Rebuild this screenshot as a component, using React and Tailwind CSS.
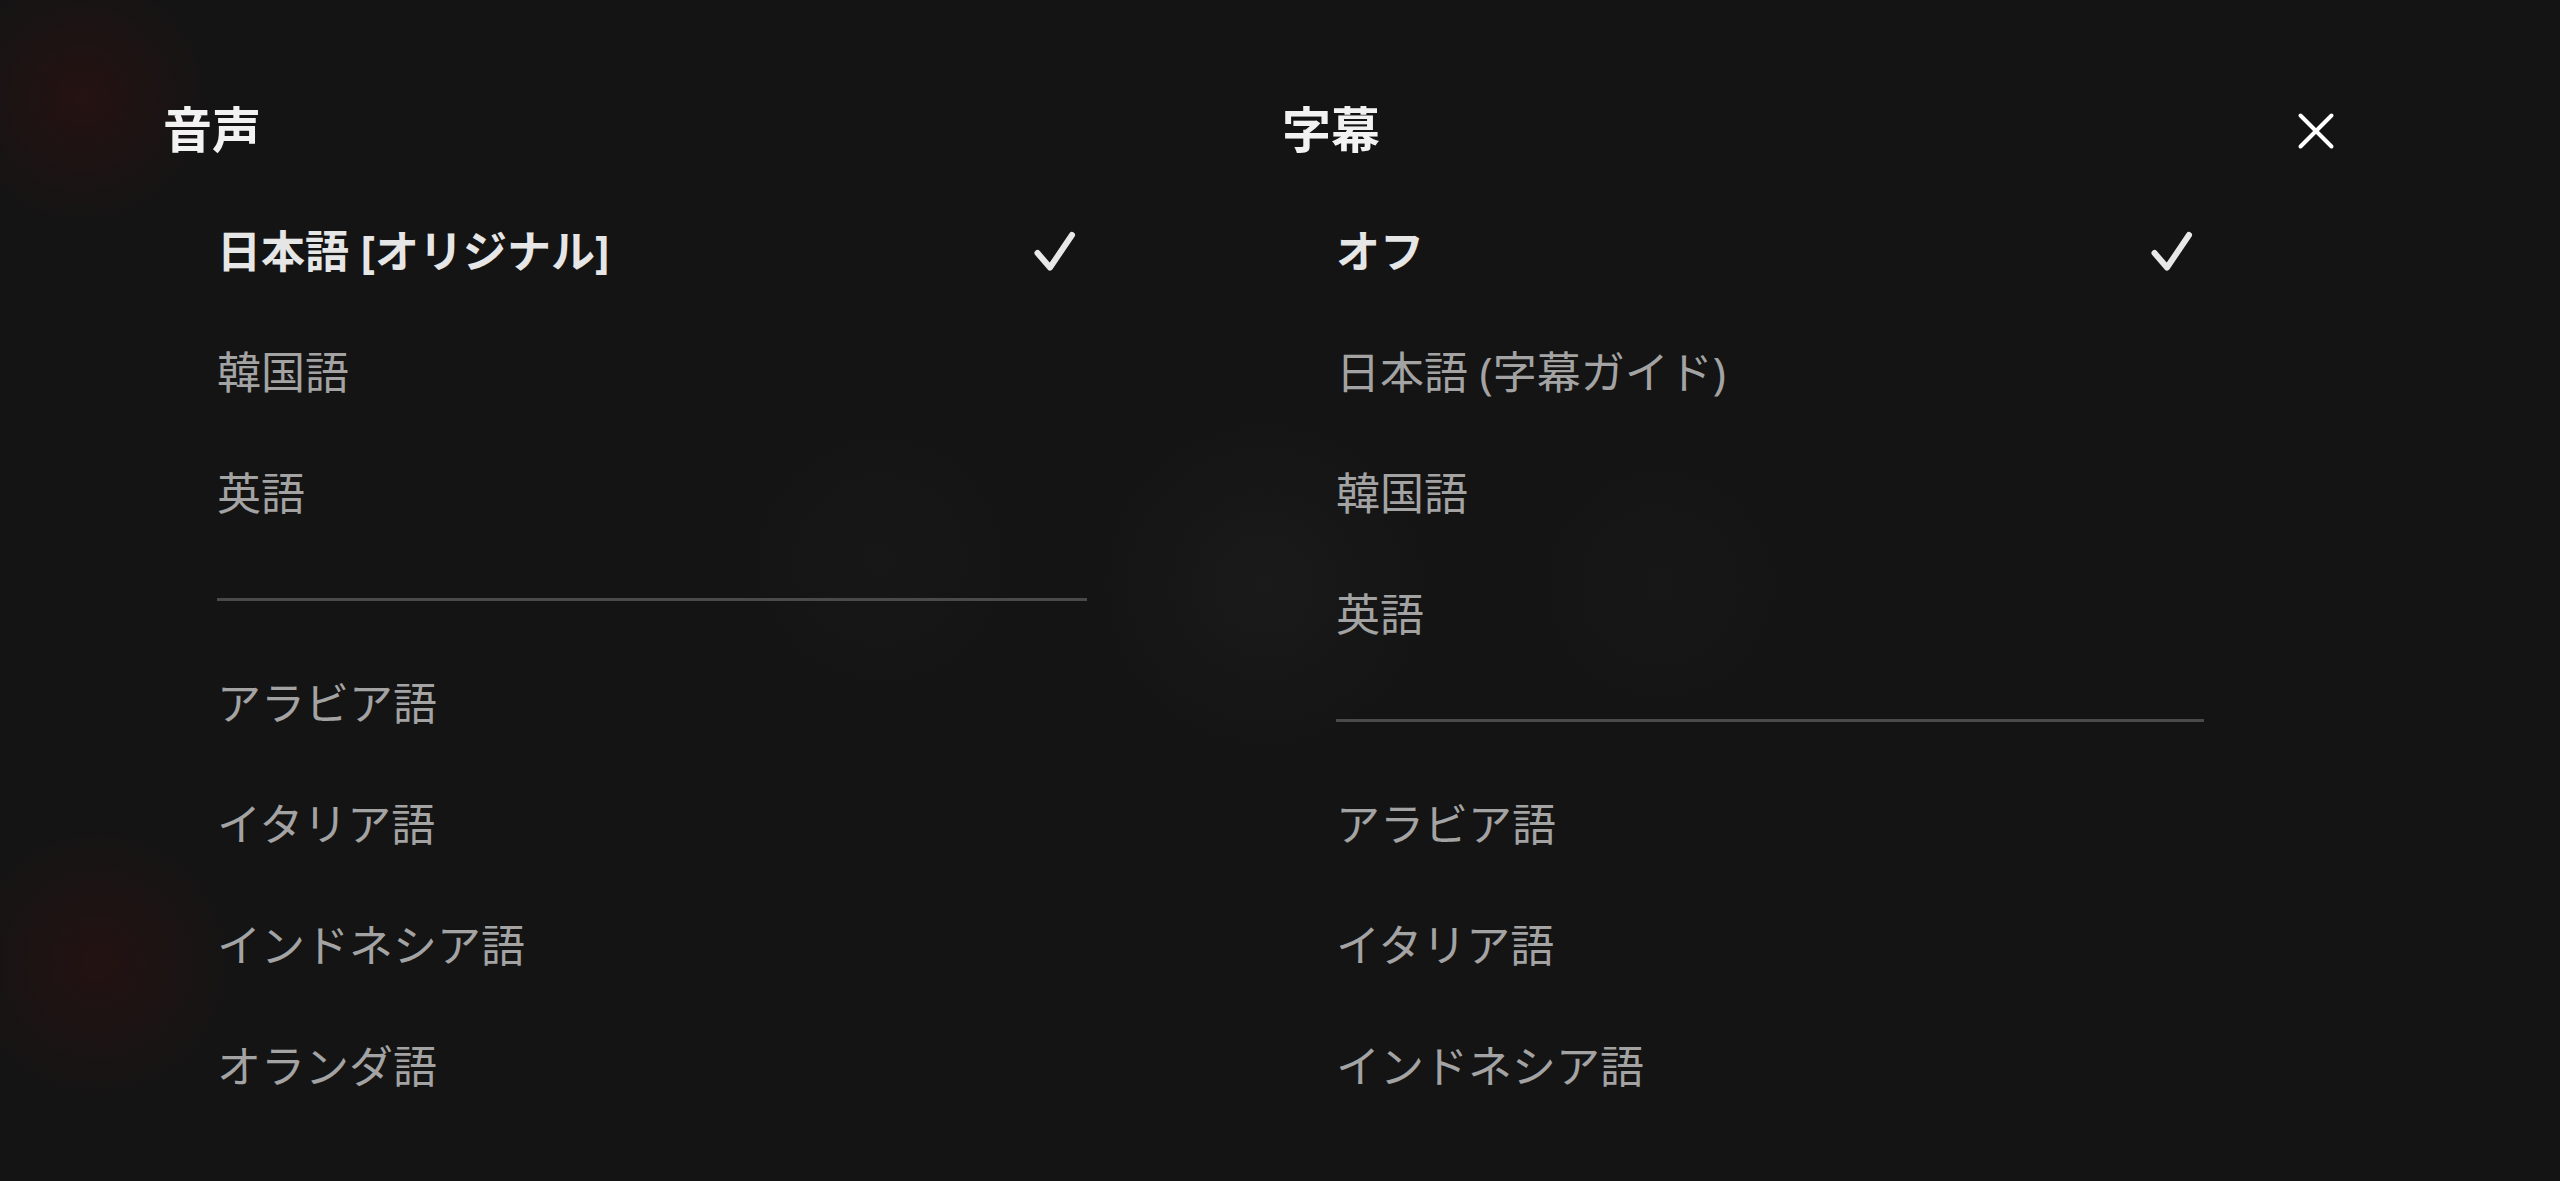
import React from "react";

function Check() {
  return (
    <svg width="48" height="48" viewBox="0 0 48 48" fill="none" className="shrink-0">
      <path d="M8.5 26 L21 40.5 L43 8" stroke="#e8e8e8" strokeWidth="6" strokeLinecap="round" strokeLinejoin="round" />
    </svg>
  );
}

function CloseIcon() {
  return (
    <svg width="48" height="48" viewBox="0 0 48 48" fill="none">
      <path d="M8.5 8.5 L39.5 39.5 M39.5 8.5 L8.5 39.5" stroke="#ffffff" strokeWidth="4" strokeLinecap="round" />
    </svg>
  );
}

function Row({ label, selected }) {
  return (
    <div className="flex h-[121px] items-center justify-between">
      <span
        className={
          selected
            ? "text-[44px] font-bold leading-none text-[#e6e6e6]"
            : "text-[44px] font-normal leading-none text-[#a3a3a3]"
        }
      >
        {label}
      </span>
      {selected ? (
        <div className="mr-[10px]">
          <Check />
        </div>
      ) : null}
    </div>
  );
}

function Column({ title, top, bottom, width }) {
  return (
    <div className={width}>
      <h2 className="pt-[99px] text-[49px] font-bold leading-[60px] text-[#f2f2f2]">{title}</h2>
      <div className="ml-[54px] mt-[31px]">
        {top.map((t, i) => (
          <Row key={t} label={t} selected={i === 0} />
        ))}
        <div className="mb-[41px] mt-[45px] h-[3px] bg-[#4a4a4a]" />
        {bottom.map((t) => (
          <Row key={t} label={t} selected={false} />
        ))}
      </div>
    </div>
  );
}

export default function App() {
  return (
    <div
      className="relative h-[1181px] w-full overflow-hidden bg-[#141414]"
      style={{ fontFamily: '"Noto Sans", "Noto Sans CJK JP", sans-serif' }}
    >
      <div className="pointer-events-none absolute inset-0 bg-[radial-gradient(circle_at_82px_98px,rgba(55,16,16,0.5),transparent_130px),radial-gradient(circle_at_98px_963px,rgba(55,16,16,0.45),transparent_140px),radial-gradient(circle_at_1265px_585px,rgba(60,60,60,0.15),transparent_170px),radial-gradient(circle_at_880px_560px,rgba(45,45,45,0.12),transparent_140px),radial-gradient(circle_at_1660px_585px,rgba(45,45,45,0.12),transparent_130px)]" />
      <div className="relative flex pl-[163px]">
        <Column
          title="音声"
          width="w-[924px]"
          top={["日本語 [オリジナル]", "韓国語", "英語"]}
          bottom={["アラビア語", "イタリア語", "インドネシア語", "オランダ語"]}
        />
        <div className="ml-[195px]">
          <Column
            title="字幕"
            width="w-[922px]"
            top={["オフ", "日本語 (字幕ガイド)", "韓国語", "英語"]}
            bottom={["アラビア語", "イタリア語", "インドネシア語"]}
          />
        </div>
        <button className="ml-[88px] mt-[107px] h-[48px] w-[48px] self-start">
          <CloseIcon />
        </button>
      </div>
    </div>
  );
}
